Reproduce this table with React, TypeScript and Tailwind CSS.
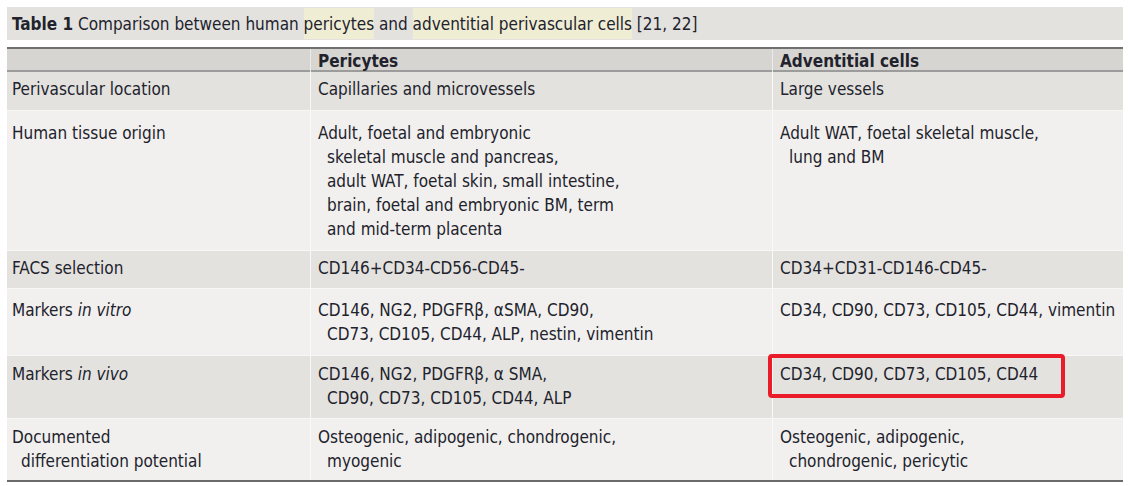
import React from "react";

interface Row {
  label: React.ReactNode[];
  pericytes: React.ReactNode[];
  adventitial: React.ReactNode[];
  height: string;
  pad: string;
  dark: boolean;
}

const rows: Row[] = [
  {
    label: ["Perivascular location"],
    pericytes: ["Capillaries and microvessels"],
    adventitial: ["Large vessels"],
    height: "h-[38px]",
    pad: "pt-[5px]",
    dark: true,
  },
  {
    label: ["Human tissue origin"],
    pericytes: [
      "Adult, foetal and embryonic",
      "skeletal muscle and pancreas,",
      "adult WAT, foetal skin, small intestine,",
      "brain, foetal and embryonic BM, term",
      "and mid-term placenta",
    ],
    adventitial: ["Adult WAT, foetal skeletal muscle,", "lung and BM"],
    height: "h-[140px]",
    pad: "pt-[10px]",
    dark: false,
  },
  {
    label: ["FACS selection"],
    pericytes: ["CD146+CD34-CD56-CD45-"],
    adventitial: ["CD34+CD31-CD146-CD45-"],
    height: "h-[38px]",
    pad: "pt-[5px]",
    dark: true,
  },
  {
    label: [
      <>
        Markers <i>in vitro</i>
      </>,
    ],
    pericytes: [
      "CD146, NG2, PDGFRβ, αSMA, CD90,",
      "CD73, CD105, CD44, ALP, nestin, vimentin",
    ],
    adventitial: ["CD34, CD90, CD73, CD105, CD44, vimentin"],
    height: "h-[67px]",
    pad: "pt-[9px]",
    dark: false,
  },
  {
    label: [
      <>
        Markers <i>in vivo</i>
      </>,
    ],
    pericytes: ["CD146, NG2, PDGFRβ, α SMA,", "CD90, CD73, CD105, CD44, ALP"],
    adventitial: ["CD34, CD90, CD73, CD105, CD44"],
    height: "h-[63px]",
    pad: "pt-[6px]",
    dark: true,
  },
  {
    label: ["Documented", "differentiation potential"],
    pericytes: ["Osteogenic, adipogenic, chondrogenic,", "myogenic"],
    adventitial: ["Osteogenic, adipogenic,", "chondrogenic, pericytic"],
    height: "h-[62px]",
    pad: "pt-[6px]",
    dark: false,
  },
];

// first line flush, the rest hang in by a few pixels
const Lines = ({ lines }: { lines: React.ReactNode[] }) => (
  <>
    {lines.map((line, i) => (
      <div key={i} className={`whitespace-nowrap ${i > 0 ? "pl-[9px]" : ""}`}>
        {line}
      </div>
    ))}
  </>
);

const App: React.FC = () => {
  return (
    <div
      className="min-h-[486px] w-[1131px] bg-white pt-[7px] pl-[7px] text-[#22222c] text-[17px] leading-[24px]"
      style={{ fontFamily: '"DejaVu Sans Condensed", "DejaVu Sans", sans-serif' }}
    >
      <div className="relative w-[1116px]">
        {/* caption */}
        <div className="flex h-[33px] items-center bg-[#e3e2df] pl-[5px]">
          <span className="font-bold">Table 1</span>
          <span className="whitespace-pre"> Comparison between human </span>
          <span className="flex h-[31px] items-center bg-[#efedd4]">pericytes</span>
          <span className="whitespace-pre"> and </span>
          <span className="flex h-[31px] items-center bg-[#efedd4]">
            adventitial perivascular cells
          </span>
          <span className="whitespace-pre"> [21, 22]</span>
        </div>

        {/* table */}
        <div className="mt-[7px] border-t-2 border-b-2 border-t-[#707070] border-b-[#6a6a6a]">
          <div className="grid h-[23px] grid-cols-[303px_462px_1fr] border-b-2 border-[#9c9c9c] bg-[#d6d5d1] font-bold">
            <div className="pl-[5px]" />
            <div className="flex items-center border-l border-[#ecebe9] pl-[7px]">Pericytes</div>
            <div className="flex items-center border-l border-[#ecebe9] pl-[7px]">Adventitial cells</div>
          </div>
          {rows.map((row, i) => (
            <div
              key={i}
              className={`grid grid-cols-[303px_462px_1fr] ${row.height} ${
                row.dark ? "bg-[#e3e2df]" : "bg-[#f1f0ee]"
              } ${i > 0 ? "border-t border-[#f7f7f6]" : ""}`}
            >
              <div className={`pl-[5px] ${row.pad}`}>
                <Lines lines={row.label} />
              </div>
              <div className={`border-l border-[#f9f9f8] pl-[7px] ${row.pad}`}>
                <Lines lines={row.pericytes} />
              </div>
              <div className={`border-l border-[#f9f9f8] pl-[7px] ${row.pad}`}>
                <Lines lines={row.adventitial} />
              </div>
            </div>
          ))}
        </div>

        {/* red highlight drawn over the in vivo markers */}
        <div className="pointer-events-none absolute left-[761px] top-[347px] h-[44px] w-[297px] rounded-[4px] border-4 border-[#ea1c2a]" />
      </div>
    </div>
  );
};

export default App;
